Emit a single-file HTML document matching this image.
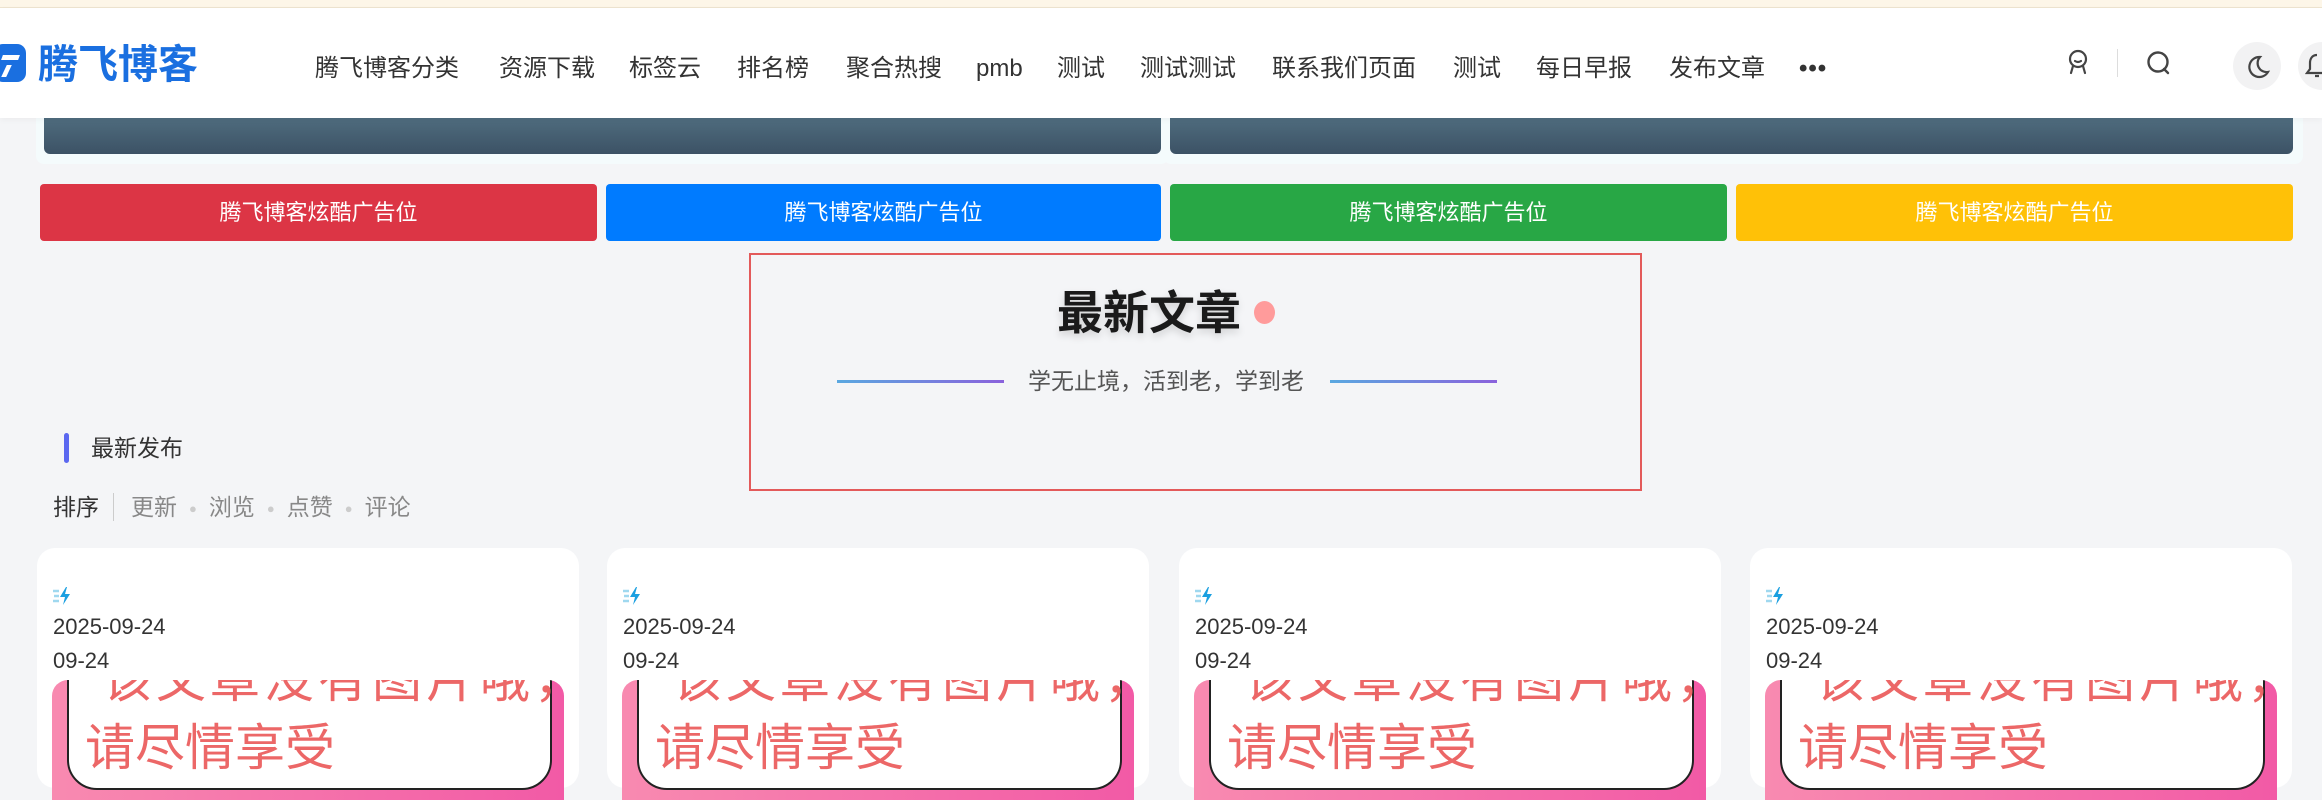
<!DOCTYPE html>
<html><head><meta charset="utf-8"><style>
*{margin:0;padding:0;box-sizing:border-box}
body{width:2322px;height:768px;overflow:hidden;background:#f4f5f7;font-family:"Liberation Sans","Noto Sans CJK SC",sans-serif;position:relative}
.a{position:absolute}
.topbar{left:0;top:0;width:2322px;height:8px;background:#fdf6e8;border-bottom:1px solid #eee4cf}
.header{left:0;top:8px;width:2322px;height:110px;background:#fff;z-index:5;box-shadow:0 2px 6px rgba(0,0,0,.04)}
.nav{top:46px;font-size:24px;color:#333;line-height:30px;white-space:nowrap}
.banner{top:118px;height:36px;border-radius:0 0 6px 6px;background:linear-gradient(180deg,#4f6c7e,#3c5265)}
.wrap{top:110px;height:54px;background:#f4fbfc;border-radius:8px}
.ad{top:184px;height:57px;border-radius:4px;color:#fff;font-size:22px;line-height:57px;text-align:center}
.card{top:548px;width:542px;height:240px;background:#fff;border-radius:18px}
.date{font-size:22px;color:#333}
.img{left:15px;top:132px;width:512px;height:120px;border-radius:16px 16px 0 0;background:linear-gradient(90deg,#f88ab0,#f25aa6);overflow:hidden}
.bub{left:15px;top:-40px;width:485px;height:150px;background:#fff;border:2px solid #222;border-radius:0 0 30px 30px}
.t1{left:50px;top:-40px;font-size:50px;color:#ec6767;white-space:nowrap;letter-spacing:4px}
.t2{left:33px;top:28px;font-size:50px;color:#ec6767;white-space:nowrap;letter-spacing:0}
.dot{color:#ccc;margin:0 12px;font-size:13px;vertical-align:middle}
</style></head><body>
<div class="a topbar"></div>
<div class="a header">
  <div class="a" style="left:-6px;top:36px;width:32px;height:38px;background:#1a6fe0;border-radius:9px"></div>
  <div class="a" style="left:2px;top:47px;width:17px;height:5px;background:#fff;transform:skewX(-20deg)"></div>
  <div class="a" style="left:4px;top:57px;width:10px;height:12px;border-left:5px solid #fff;transform:skewX(-25deg)"></div>
  <div class="a" style="left:38px;top:32px;font-size:40px;font-weight:bold;color:#1a6fe0;line-height:50px">腾飞博客</div>
  <div class="a nav" style="left:315px">腾飞博客分类</div>
  <div class="a nav" style="left:499px">资源下载</div>
  <div class="a nav" style="left:629px">标签云</div>
  <div class="a nav" style="left:737px">排名榜</div>
  <div class="a nav" style="left:846px">聚合热搜</div>
  <div class="a nav" style="left:976px">pmb</div>
  <div class="a nav" style="left:1057px">测试</div>
  <div class="a nav" style="left:1140px">测试测试</div>
  <div class="a nav" style="left:1272px">联系我们页面</div>
  <div class="a nav" style="left:1453px">测试</div>
  <div class="a nav" style="left:1536px">每日早报</div>
  <div class="a nav" style="left:1669px">发布文章</div>
  <div class="a nav" style="left:1799px;font-weight:bold;letter-spacing:1px">•••</div>
  <svg class="a" style="left:2064px;top:40px" width="28" height="30" viewBox="0 0 28 30" fill="none" stroke="#444" stroke-width="2.2" stroke-linecap="round"><circle cx="14" cy="11" r="8"/><path d="M11 13q3 2 6 0M9 18l-2 7M19 18l2 7"/></svg>
  <div class="a" style="left:2117px;top:41px;width:1px;height:28px;background:#ddd"></div>
  <svg class="a" style="left:2145px;top:40px" width="30" height="30" viewBox="0 0 30 30" fill="none" stroke="#444" stroke-width="2.4" stroke-linecap="round"><circle cx="13" cy="14" r="9.5"/><path d="M19 21l4 4"/></svg>
  <div class="a" style="left:2233px;top:34px;width:48px;height:48px;border-radius:50%;background:#f2f2f3"></div>
  <svg class="a" style="left:2245px;top:46px" width="26" height="26" viewBox="0 0 26 26" fill="none" stroke="#444" stroke-width="2.2"><path d="M15 3a10 10 0 1 0 8 15A9 9 0 0 1 15 3z"/></svg>
  <div class="a" style="left:2298px;top:34px;width:48px;height:48px;border-radius:50%;background:#f2f2f3"></div>
  <svg class="a" style="left:2305px;top:44px" width="24" height="28" viewBox="0 0 24 28" fill="none" stroke="#444" stroke-width="2.2"><path d="M12 3c-5 0-7 4-7 8v6l-3 4h20M10 24h4"/></svg>
</div>
<div class="a wrap" style="left:36px;width:1133px"></div>
<div class="a wrap" style="left:1163px;width:1140px"></div>
<div class="a banner" style="left:44px;width:1117px"></div>
<div class="a banner" style="left:1170px;width:1123px"></div>
<div class="a ad" style="left:40px;width:557px;background:#dc3545">腾飞博客炫酷广告位</div>
<div class="a ad" style="left:606px;width:555px;background:#007bff">腾飞博客炫酷广告位</div>
<div class="a ad" style="left:1170px;width:557px;background:#28a745">腾飞博客炫酷广告位</div>
<div class="a ad" style="left:1736px;width:557px;background:#ffc107">腾飞博客炫酷广告位</div>
<div class="a" style="left:749px;top:253px;width:893px;height:238px;border:2px solid #e35a5a"></div>
<div class="a" style="left:1057px;top:284px;font-size:46px;font-weight:bold;color:#1a1a1a;line-height:58px;text-shadow:0 4px 8px rgba(0,0,0,.15)">最新文章</div>
<div class="a" style="left:1254px;top:301px;width:21px;height:23px;border-radius:50%;background:#ff9b9b"></div>
<div class="a" style="left:837px;top:380px;width:167px;height:3px;background:linear-gradient(90deg,#5aa8e0,#8a62dc)"></div>
<div class="a" style="left:1330px;top:380px;width:167px;height:3px;background:linear-gradient(90deg,#5aa8e0,#8a62dc)"></div>
<div class="a" style="left:1028px;top:367px;font-size:23px;color:#555;line-height:28px">学无止境，活到老，学到老</div>
<div class="a" style="left:64px;top:433px;width:5px;height:30px;border-radius:3px;background:#5b68f0"></div>
<div class="a" style="left:91px;top:433px;font-size:23px;color:#333;line-height:30px">最新发布</div>
<div class="a" style="left:53px;top:493px;font-size:23px;color:#333;line-height:28px">排序</div>
<div class="a" style="left:113px;top:493px;width:1px;height:28px;background:#ccc"></div>
<div class="a" style="left:131px;top:493px;font-size:23px;color:#888;line-height:28px;white-space:nowrap">更新<span class="dot">●</span>浏览<span class="dot">●</span>点赞<span class="dot">●</span>评论</div>

<div class="a card" style="left:37px">
 <svg class="a" style="left:16px;top:39px" width="20" height="18" viewBox="0 0 20 18"><path d="M0 4h6M1 9h5M0 14h6" stroke="#9fd8ef" stroke-width="2.5"/><path d="M13 0L7 10h5l-2 8 7-11h-5l2-7z" fill="#1a9fe0"/></svg>
 <div class="a date" style="left:16px;top:66px">2025-09-24</div>
 <div class="a date" style="left:16px;top:100px">09-24</div>
 <div class="a img"><div class="a bub"></div><div class="a t1">该文章没有图片哦，</div><div class="a t2">请尽情享受</div></div>
</div>
<div class="a card" style="left:607px">
 <svg class="a" style="left:16px;top:39px" width="20" height="18" viewBox="0 0 20 18"><path d="M0 4h6M1 9h5M0 14h6" stroke="#9fd8ef" stroke-width="2.5"/><path d="M13 0L7 10h5l-2 8 7-11h-5l2-7z" fill="#1a9fe0"/></svg>
 <div class="a date" style="left:16px;top:66px">2025-09-24</div>
 <div class="a date" style="left:16px;top:100px">09-24</div>
 <div class="a img"><div class="a bub"></div><div class="a t1">该文章没有图片哦，</div><div class="a t2">请尽情享受</div></div>
</div>
<div class="a card" style="left:1179px">
 <svg class="a" style="left:16px;top:39px" width="20" height="18" viewBox="0 0 20 18"><path d="M0 4h6M1 9h5M0 14h6" stroke="#9fd8ef" stroke-width="2.5"/><path d="M13 0L7 10h5l-2 8 7-11h-5l2-7z" fill="#1a9fe0"/></svg>
 <div class="a date" style="left:16px;top:66px">2025-09-24</div>
 <div class="a date" style="left:16px;top:100px">09-24</div>
 <div class="a img"><div class="a bub"></div><div class="a t1">该文章没有图片哦，</div><div class="a t2">请尽情享受</div></div>
</div>
<div class="a card" style="left:1750px">
 <svg class="a" style="left:16px;top:39px" width="20" height="18" viewBox="0 0 20 18"><path d="M0 4h6M1 9h5M0 14h6" stroke="#9fd8ef" stroke-width="2.5"/><path d="M13 0L7 10h5l-2 8 7-11h-5l2-7z" fill="#1a9fe0"/></svg>
 <div class="a date" style="left:16px;top:66px">2025-09-24</div>
 <div class="a date" style="left:16px;top:100px">09-24</div>
 <div class="a img"><div class="a bub"></div><div class="a t1">该文章没有图片哦，</div><div class="a t2">请尽情享受</div></div>
</div>
</body></html>
